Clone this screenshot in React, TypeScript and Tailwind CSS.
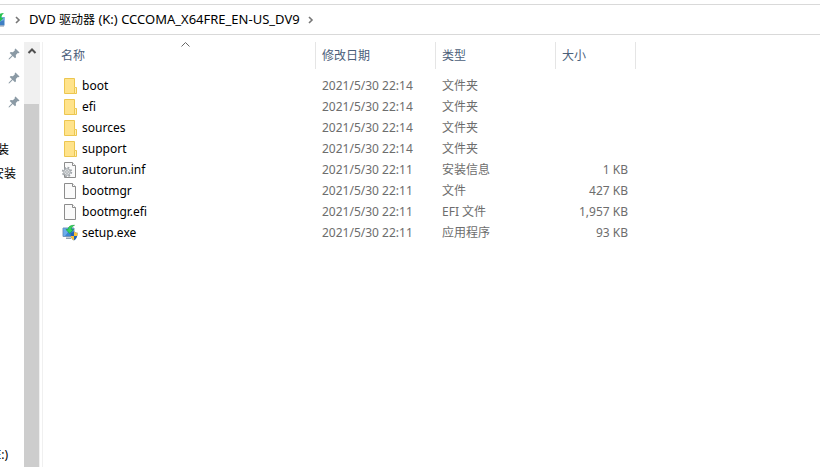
import type { ReactNode } from 'react';

type FileKind = 'folder' | 'inf' | 'file' | 'exe';

interface Entry {
  name: string;
  kind: FileKind;
  modified: string;
  type: string;
  size?: string;
}

const entries: Entry[] = [
  { name: 'boot', kind: 'folder', modified: '2021/5/30 22:14', type: '文件夹' },
  { name: 'efi', kind: 'folder', modified: '2021/5/30 22:14', type: '文件夹' },
  { name: 'sources', kind: 'folder', modified: '2021/5/30 22:14', type: '文件夹' },
  { name: 'support', kind: 'folder', modified: '2021/5/30 22:14', type: '文件夹' },
  { name: 'autorun.inf', kind: 'inf', modified: '2021/5/30 22:11', type: '安装信息', size: '1 KB' },
  { name: 'bootmgr', kind: 'file', modified: '2021/5/30 22:11', type: '文件', size: '427 KB' },
  { name: 'bootmgr.efi', kind: 'file', modified: '2021/5/30 22:11', type: 'EFI 文件', size: '1,957 KB' },
  { name: 'setup.exe', kind: 'exe', modified: '2021/5/30 22:11', type: '应用程序', size: '93 KB' },
];

function FolderIcon() {
  return (
    <svg className="size-4 shrink-0" viewBox="0 0 16 16">
      <path d="M2.500.5h10v9h1.500v6H2.500z" fill="#ffe38b" stroke="#ecc650" />
      <path d="M12.500 15.500V10l1-.5h1v6z" fill="#fff0b5" stroke="#ecc650" />
    </svg>
  );
}

function PageShape() {
  return (
    <>
      <path d="M2.500.5h8l3 3v12h-11z" fill="#fafafa" stroke="#8c8c8c" />
      <path d="M10.500.5v3h3" fill="#fff" stroke="#8c8c8c" />
    </>
  );
}

function FileIcon() {
  return (
    <svg className="size-4 shrink-0" viewBox="0 0 16 16">
      <PageShape />
    </svg>
  );
}

function InfIcon() {
  return (
    <svg className="size-4 shrink-0 overflow-visible" viewBox="0 0 16 16">
      <PageShape />
      <circle cx="5" cy="10" r="4.300" fill="none" stroke="#a0a5a9" strokeWidth="1.800" strokeDasharray="1.800 1.577" />
      <circle cx="5" cy="10" r="3.300" fill="#dfe2e4" stroke="#a3a8ac" />
      <circle cx="5" cy="10" r="1.300" fill="#fff" stroke="#92989c" strokeWidth=".8" />
    </svg>
  );
}

function SetupIcon() {
  return (
    <svg className="size-4 shrink-0 overflow-visible" viewBox="0 0 16 16">
      <path d="M1 3h11v8.500H1z" fill="#3c86d4" stroke="#7898bb" />
      <path d="M1.500 3.500H9L3 11H1.500z" fill="#6badec" />
      <path d="M4 12.500h5v1.500H4z" fill="#93a0ae" />
      <path d="M12.500.3C8.500.1 6.300 1.500 6 4.500H4l3.700 4 3.800-4H9.300C9.300 2.500 10.300 1.200 12.500.3z" fill="#35d65c" stroke="#149c3a" strokeWidth=".6" />
      <path d="M12 6.500c1 .9 2 1.200 3.500 1.200 0 4-.8 6.200-3.500 7.800-2.700-1.600-3.500-3.800-3.500-7.800 1.500 0 2.500-.3 3.500-1.200z" fill="#1f62b4" />
      <path d="M12 6.500c1 .9 2 1.200 3.500 1.200 0 1.300-.1 2.300-.3 3.300H12zM8.800 11H12v4.500c-1.900-1.100-2.800-2.500-3.200-4.500z" fill="#f8c03a" />
    </svg>
  );
}

const icons: Record<FileKind, ReactNode> = {
  folder: <FolderIcon />,
  inf: <InfIcon />,
  file: <FileIcon />,
  exe: <SetupIcon />,
};

function PinIcon() {
  return (
    <svg className="size-3" viewBox="0 0 12 12" fill="#8b9aa5">
      <path d="M7.500.5l4 4-.8.8-.9-.2-2 2 .2 2.200-1 1L4.700 8 1.500 11.200l-.9.2.2-.9L4 7.300 1.700 5l1-1 2.200.2 2-2-.2-.9z" />
    </svg>
  );
}

function ChevronRight() {
  return (
    <svg className="h-2 w-1.5" viewBox="0 0 6 8" fill="none" stroke="#777" strokeWidth="1.6">
      <path d="M1 1l3 3-3 3" />
    </svg>
  );
}

/* Drive icon, cut off by the left edge of the window */
function DriveIcon() {
  return (
    <svg className="h-4 w-[13px]" viewBox="0 0 13 16">
      <path d="M0 5h12.500v8.500H0z" fill="#3f7fc4" />
      <path d="M0 5h12.500v3L0 13z" fill="#72a9de" />
      <path d="M12 1C8 1 6 2.500 6 5H4l4 4.500L11.500 6H9.500C9.500 4 10 2.500 12 1z" fill="#25c04e" />
      <path d="M0 13.500h12v1H0z" fill="#8795a5" />
    </svg>
  );
}

function AddressBar() {
  return (
    <header className="pt-1">
      <nav aria-label="Address" className="flex h-[31px] items-center border-y border-[#d9d9d9] text-black">
        <div className="flex w-[15px] overflow-hidden">
          <div className="-ml-2">
            <DriveIcon />
          </div>
        </div>
        <ChevronRight />
        <a href="#drive" className="ml-2 mr-2 whitespace-nowrap pb-0.5 text-[13px]">
          DVD <span className="text-xs">驱动器</span> (K:) CCCOMA_X64FRE_EN-US_DV9
        </a>
        <ChevronRight />
      </nav>
    </header>
  );
}

function Sidebar() {
  return (
    <nav aria-label="Quick access" className="flex w-6 flex-col overflow-hidden text-black">
      {[0, 1, 2].map((i) => (
        <div key={i} className="flex h-6 items-center justify-end pr-1">
          <PinIcon />
        </div>
      ))}
      <div className="h-6" />
      <a href="#install" className="flex h-6 items-center justify-end whitespace-nowrap pr-[15px]">
        装
      </a>
      <a href="#setup" className="flex h-6 items-center justify-end whitespace-nowrap pr-2">
        安装
      </a>
      <a href="#e" className="mt-auto flex h-6 items-center justify-end whitespace-nowrap pr-4">
        E:)
      </a>
    </nav>
  );
}

function ScrollBar() {
  return (
    <div className="flex w-4 flex-col bg-[#f0f0f0]">
      <button type="button" aria-label="Scroll up" className="flex h-[18px] items-center justify-center">
        <svg className="h-2 w-2.5" viewBox="0 0 10 8" fill="none" stroke="#505050" strokeWidth="2">
          <path d="M1.500 6L5 2.500 8.500 6" />
        </svg>
      </button>
      <div className="mr-px mt-11 grow bg-[#cdcdcd]" />
    </div>
  );
}

function ColumnHeader({ label, first }: { label: string; first?: boolean }) {
  return (
    <th scope="col" className="p-0 pb-1.5 font-normal">
      <button
        type="button"
        className={`relative flex h-[27px] w-full items-center border-r border-[#e5e5e5] text-[#4c607a] ${first ? 'pl-[18px]' : 'pl-1.5'}`}
      >
        {label}
        {first && (
          <svg className="absolute left-[138px] top-0 h-[5px] w-[9px]" viewBox="0 0 9 5" fill="none" stroke="#666">
            <path d="M.5 4.500l4-4 4 4" />
          </svg>
        )}
      </button>
    </th>
  );
}

function FileTable() {
  return (
    <table className="w-[593px] table-fixed border-collapse text-left">
      <colgroup>
        <col />
        <col className="w-[120px]" />
        <col className="w-[120px]" />
        <col className="w-20" />
      </colgroup>
      <thead>
        <tr>
          <ColumnHeader label="名称" first />
          <ColumnHeader label="修改日期" />
          <ColumnHeader label="类型" />
          <ColumnHeader label="大小" />
        </tr>
      </thead>
      <tbody className="text-[#6d6d6d]">
        {entries.map((entry) => (
          <tr key={entry.name} className="h-[21px]">
            <td className="p-0 pl-[19px]">
              <div className="flex items-center gap-1 text-black">
                {icons[entry.kind]}
                {entry.name}
              </div>
            </td>
            <td className="whitespace-nowrap p-0 pl-1.5">{entry.modified}</td>
            <td className="whitespace-nowrap p-0 pl-1.5">{entry.type}</td>
            <td className="whitespace-nowrap p-0 pr-2 text-right">{entry.size}</td>
          </tr>
        ))}
      </tbody>
    </table>
  );
}

export default function App() {
  return (
    <div className="flex min-h-screen flex-col bg-white font-['Noto_Sans','Noto_Sans_CJK_SC',sans-serif] text-xs leading-5">
      <AddressBar />
      <div className="flex grow pt-[7px]">
        <Sidebar />
        <ScrollBar />
        <main className="ml-0.5 grow border-l border-[#f0f0f0]">
          <FileTable />
        </main>
      </div>
    </div>
  );
}
